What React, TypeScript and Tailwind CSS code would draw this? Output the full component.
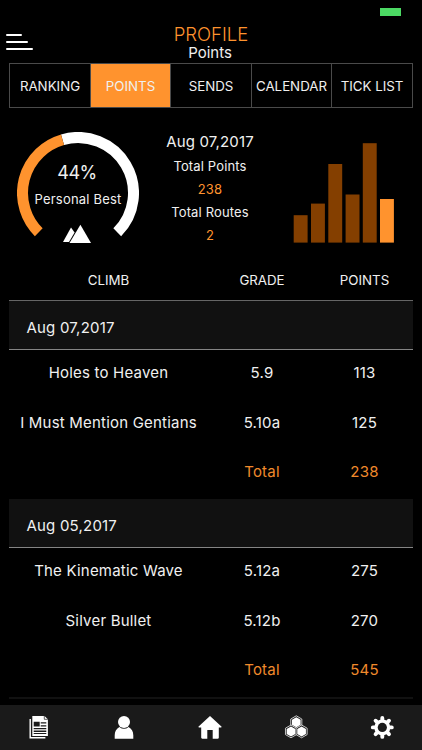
import type { ReactNode } from "react";

const tabs = ["RANKING", "POINTS", "SENDS", "CALENDAR", "TICK LIST"];

const bars = [
  { x: 293.7, top: 215.2 },
  { x: 311, top: 203.6 },
  { x: 328.3, top: 164 },
  { x: 345.6, top: 194.5 },
  { x: 362.8, top: 143.2 },
  { x: 380, top: 199 },
];

const sections = [
  {
    date: "Aug 07,2017",
    total: "238",
    climbs: [
      { name: "Holes to Heaven", grade: "5.9", points: "113" },
      { name: "I Must Mention Gentians", grade: "5.10a", points: "125" },
    ],
  },
  {
    date: "Aug 05,2017",
    total: "545",
    climbs: [
      { name: "The Kinematic Wave", grade: "5.12a", points: "275" },
      { name: "Silver Bullet", grade: "5.12b", points: "270" },
    ],
  },
];

function arc(fromDeg: number, toDeg: number) {
  const r = 55.5;
  const pt = (deg: number) => {
    const a = (deg * Math.PI) / 180;
    return `${(61 + r * Math.sin(a)).toFixed(2)} ${(61 - r * Math.cos(a)).toFixed(2)}`;
  };
  return `M${pt(fromDeg)}A${r} ${r} 0 ${toDeg - fromDeg > 180 ? 1 : 0} 1 ${pt(toDeg)}`;
}

function Gauge() {
  return (
    <div className="relative ml-[17px] mt-[24px] h-[122px] w-[122px] shrink-0">
      <svg width="122" height="122" viewBox="0 0 122 122" fill="none" strokeWidth="11">
        <path d={arc(-16.2, 135)} stroke="#fff" />
        <path d={arc(-135, -16.2)} stroke="#ff932e" />
        <path d="M46 110 54 95.5l3.6 5-5.6 9.5z" fill="#fff" strokeWidth="0" />
        <path d="M52.5 111 63.4 92.8 74 111z" fill="#fff" strokeWidth="0" />
      </svg>
      <div className="absolute inset-x-0 top-[30px] text-center">
        <div className="-ml-[2px] text-[18px] leading-[21px] tracking-[-0.5px]">44%</div>
        <div className="-mx-2 mt-[7px] whitespace-nowrap text-[13px] leading-[18px] tracking-[0.2px]">Personal Best</div>
      </div>
    </div>
  );
}

function Cells({ a, b, c, className = "" }: { a: ReactNode; b: string; c: string; className?: string }) {
  return (
    <div className={`grid grid-cols-[199px_108px_97px] items-center text-center ${className}`}>
      <span className="whitespace-nowrap">{a}</span>
      <span>{b}</span>
      <span>{c}</span>
    </div>
  );
}

function hex(cx: number, cy: number, r: number) {
  return Array.from({ length: 6 }, (_, i) => {
    const a = (Math.PI / 3) * i + Math.PI / 6;
    return `${(cx + r * Math.cos(a)).toFixed(2)},${(cy + r * Math.sin(a)).toFixed(2)}`;
  }).join(" ");
}

const hexCenters = [
  [12, 7.2],
  [6.7, 16.4],
  [17.3, 16.4],
];

function BottomBar() {
  return (
    <nav className="flex h-[45px] shrink-0 items-start bg-[#1a1a1a] pt-[10px]">
      <div className="ml-[-5px] flex w-[430px] shrink-0 justify-around">
        <svg width="24" height="26" viewBox="-0.7 0 24 26">
          <path d="M3.5 4v18.8h15.2" fill="none" stroke="#fff" strokeWidth="1.4" />
          <path d="M5.6 1h12.2l3.4 3.2v16.7H5.6z" fill="#fff" />
          <path d="M17.6 1v3.3h3.6" fill="none" stroke="#1a1a1a" strokeWidth=".7" />
          <path d="M7 6.8h6v4.8H7zM14 7.2h5.6v1.3H14zM14 10.2h5.6v1.3H14zM7 13h12.6v1.3H7zM7 15.6h12.6v1.3H7zM7 18h12.6v1H7z" fill="#1a1a1a" />
        </svg>
        <svg width="24" height="26" viewBox="0 0 24 26" fill="#fff">
          <circle cx="12" cy="7" r="6" />
          <path d="M2.7 23.8v-3.5c0-4 1.8-6.8 4.7-8.4a7.2 7.2 0 0 0 9.2 0c2.9 1.6 4.7 4.4 4.7 8.4v3.5z" />
        </svg>
        <svg width="24" height="26" viewBox="0 0 24 26" fill="#fff">
          <path d="M12 1 .6 11.6c-.4.5-.2.9.4.9h2.2v10.1c0 .8.4 1.2 1.1 1.2h5V15h5.4v8.8h5c.7 0 1.1-.4 1.1-1.2V12.5H23c.6 0 .8-.4.4-.9z" />
        </svg>
        <svg width="24" height="26" viewBox="-0.3 0 24 26">
          {hexCenters.map(([x, y]) => (
            <polygon key={x} points={hex(x, y, 6.4)} fill="#1a1a1a" stroke="#fff" strokeWidth=".75" />
          ))}
          {hexCenters.map(([x, y]) => (
            <polygon key={x} points={hex(x, y, 5)} fill="#fff" />
          ))}
        </svg>
        <svg width="24" height="26" viewBox="-0.3 0 24 26">
          <g stroke="#fff" strokeWidth="3.9" strokeLinecap="round">
            <path d="M12 2.9v19M2.5 12.4h19M5.3 5.7l13.4 13.4M18.7 5.7 5.3 19.1" />
          </g>
          <circle cx="12" cy="12.4" r="8" fill="#fff" />
          <circle cx="12" cy="12.4" r="4.6" fill="#1a1a1a" />
        </svg>
      </div>
    </nav>
  );
}

export default function App() {
  return (
    <div className="flex h-[750px] w-[422px] flex-col overflow-hidden bg-black font-['Inter',sans-serif] font-normal text-[#f0f0f0]">
      <header className="relative h-[63px] shrink-0 pt-[25px] text-center">
        <div className="absolute left-[380px] top-[8px] h-[8px] w-[21px] bg-[#4cd964]" />
        <div className="absolute left-[6px] top-[34px] flex flex-col gap-[5px]">
          <span className="h-[2px] w-[16px] rounded-full bg-white" />
          <span className="h-[2px] w-[22px] rounded-full bg-white" />
          <span className="h-[2px] w-[27px] rounded-full bg-white" />
        </div>
        <h1 className="text-[18.5px] font-light leading-[18px] text-[#ff932e]">PROFILE</h1>
        <h2 className="pr-[2px] text-[15px] leading-[19px]">Points</h2>
      </header>

      <div className="mx-[9px] grid h-[45px] shrink-0 grid-cols-[81px_80px_81px_80px_80px] border border-[#4a4a4a]">
        {tabs.map((tab, i) => (
          <div
            key={tab}
            className={`flex items-center justify-center whitespace-nowrap pt-[2px] text-[13.3px] ${i < 4 ? "border-r border-[#4a4a4a]" : ""} ${i === 1 ? "bg-[#ff932e]" : ""}`}
          >
            {tab}
          </div>
        ))}
      </div>

      <section className="flex h-[149px] shrink-0">
        <Gauge />
        <div className="ml-[16px] w-[110px] pt-[22px] text-center text-[13px] leading-[23px] tracking-[0.15px]">
          <div className="text-[15px] leading-[23px]">Aug 07,2017</div>
          <div className="pt-[2px]">Total Points</div>
          <div className="text-[#ff932e]">238</div>
          <div>Total Routes</div>
          <div className="text-[#ff932e]">2</div>
        </div>
        <svg className="ml-[25px] mt-[32px]" width="110" height="105" viewBox="290 140 110 105">
          {bars.map((b, i) => (
            <rect key={b.x} x={b.x} y={b.top} width="13.9" height={242.6 - b.top} fill={i === 5 ? "#ff932e" : "#843f00"} />
          ))}
        </svg>
      </section>

      <main className="mx-[9px] flex-1 overflow-hidden">
        <Cells a="CLIMB" b="GRADE" c="POINTS" className="h-[43px] pt-[4px] text-[13.3px]" />
        {sections.map((s, i) => (
          <div key={s.date}>
            <div
              className={`flex items-center border-b border-b-[#858585] bg-[#111] pl-[17.5px] pt-[6px] text-[15px] tracking-[0.2px] ${i === 0 ? "h-[50px] border-t border-t-[#666]" : "h-[49.5px]"}`}
            >
              {s.date}
            </div>
            {s.climbs.map((c) => (
              <Cells key={c.name} a={c.name} b={c.grade} c={c.points} className="h-[49.5px] pb-[3px] text-[15px] tracking-[0.2px]" />
            ))}
            <Cells a="" b="Total" c={s.total} className="h-[49.5px] pb-[3px] text-[15px] tracking-[0.2px] text-[#f08a2c]" />
          </div>
        ))}
        <div className="h-[2px] bg-[#111]" />
      </main>

      <BottomBar />
    </div>
  );
}
